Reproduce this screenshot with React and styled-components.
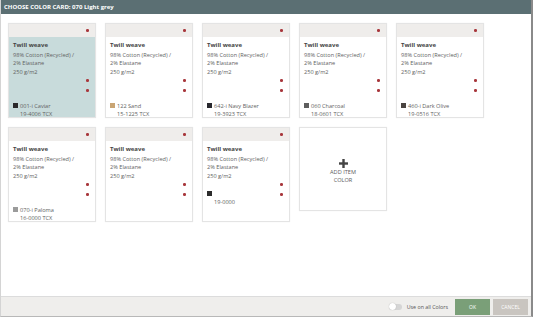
import React from 'react'
import styled, { createGlobalStyle } from 'styled-components'

const GlobalStyle = createGlobalStyle`
  html, body {
    margin: 0;
    padding: 0;
    background: #fff;
  }
  body {
    font-family: "Open Sans", "Liberation Sans", sans-serif;
  }
`

const Dialog = styled.div`
  width: 533px;
  height: 317px;
  box-sizing: border-box;
  display: flex;
  flex-direction: column;
  border-left: 1px solid #d4d4d4;
  border-right: 2px solid #8a8a8a;
  border-bottom: 1px solid #b8b8b8;
  background: #fff;
  overflow: hidden;
`

const Title = styled.div`
  height: 14px;
  flex-shrink: 0;
  background: #5b6f73;
  color: #fff;
  font-size: 6px;
  font-weight: 700;
  line-height: 14px;
  padding-left: 3px;
  text-transform: uppercase;

  span {
    text-transform: none;
  }
`

const Grid = styled.div`
  display: grid;
  grid-template-columns: repeat(5, 88px);
  grid-auto-rows: min-content;
  column-gap: 9px;
  row-gap: 9px;
  padding: 9px 0 0 7px;
  align-items: start;
`

const Card = styled.div`
  height: 95px;
  box-sizing: border-box;
  border: 1px solid #e4e4e4;
  box-shadow: 0 0 1px rgba(0, 0, 0, 0.08);
  background: ${p => (p.$selected ? '#c8dbdb' : '#fff')};
  display: flex;
  flex-direction: column;
`

const CardHead = styled.div`
  height: 13px;
  flex-shrink: 0;
  background: #efedeb;
  display: flex;
  align-items: center;
  justify-content: flex-end;
  padding-right: 6px;
`

const Dot = styled.span`
  display: block;
  width: 2.6px;
  height: 2.6px;
  border-radius: 50%;
  background: #a8373c;
`

const CardBody = styled.div`
  padding: 4px 6px 0 4px;
  font-size: 5.6px;
  line-height: 8px;
  color: #626262;
`

const Fabric = styled.div`
  font-size: 6px;
  font-weight: 700;
  color: #444;
  margin-bottom: 2px;
`

const Weight = styled.div`
  margin-top: 1px;
`

const Dots = styled.div`
  display: flex;
  flex-direction: column;
  align-items: flex-end;
  gap: 7.4px;
  margin-top: 3px;
  margin-right: 0.5px;
`

const ColorInfo = styled.div`
  margin-top: ${p => (p.$raised ? '-6px' : '10px')};
`

const ColorName = styled.div`
  display: flex;
  align-items: center;
  gap: 2px;
  height: 8px;
`

const Swatch = styled.span`
  display: inline-block;
  width: 5px;
  height: 5px;
  background: ${p => p.$color};
`

const Code = styled.div`
  padding-left: 7px;
`

const AddCard = styled.div`
  height: 84px;
  box-sizing: border-box;
  border: 1px solid #e4e4e4;
  box-shadow: 0 0 1px rgba(0, 0, 0, 0.08);
  display: flex;
  flex-direction: column;
  align-items: center;
  justify-content: center;
  padding-top: 4px;
  font-size: 5.6px;
  line-height: 8px;
  color: #5d5d5d;
  text-align: center;
  text-transform: uppercase;

  svg {
    display: block;
  }
`

const Footer = styled.div`
  margin-top: auto;
  height: 19px;
  flex-shrink: 0;
  background: #efeeec;
  border-top: 1px solid #dcdcdc;
  display: flex;
  align-items: center;
  justify-content: flex-end;
  padding-right: 3px;
`

const Toggle = styled.span`
  position: relative;
  width: 13px;
  height: 6px;
  border-radius: 3px;
  background: #d5d5d5;
  margin-right: 5px;

  &::after {
    content: '';
    position: absolute;
    left: 0;
    top: -0.5px;
    width: 7px;
    height: 7px;
    border-radius: 50%;
    background: #fff;
    box-shadow: 0 0 1px rgba(0, 0, 0, 0.3);
  }
`

const ToggleLabel = styled.span`
  font-size: 5.3px;
  color: #555;
  margin-right: 4px;
`

const Button = styled.button`
  width: 35px;
  height: 16px;
  border: none;
  margin: 0 0 0 3px;
  padding: 0;
  font-family: inherit;
  font-size: 5px;
  color: #fff;
  text-transform: uppercase;
  background: ${p => (p.$primary ? '#7a9f78' : '#c9c5c0')};
`

const colors = [
  { name: '001-i Caviar', code: '19-4006 TCX', swatch: '#2b292b', selected: true },
  { name: '122 Sand', code: '15-1225 TCX', swatch: '#c9a574' },
  { name: '642-i Navy Blazer', code: '19-3923 TCX', swatch: '#28282e' },
  { name: '060 Charcoal', code: '18-0601 TCX', swatch: '#5e5e5e' },
  { name: '460-i Dark Olive', code: '19-0516 TCX', swatch: '#4a4441' },
  { name: '070-i Paloma', code: '16-0000 TCX', swatch: '#9b9b9b' },
  { empty: true },
  { name: '', code: '19-0000', swatch: '#2c2c2c', raised: true },
]

const PlusIcon = () => (
  <svg width="9" height="9" viewBox="0 0 9 9">
    <rect x="3.3" y="0" width="2.4" height="9" fill="#444" />
    <rect x="0" y="3.3" width="9" height="2.4" fill="#444" />
  </svg>
)

const ColorCard = ({ color }) => (
  <Card $selected={color.selected}>
    <CardHead>
      <Dot />
    </CardHead>
    <CardBody>
      <Fabric>Twill weave</Fabric>
      <div>98% Cotton (Recycled) /</div>
      <div>2% Elastane</div>
      <Weight>250 g/m2</Weight>
      <Dots>
        <Dot />
        <Dot />
      </Dots>
      {!color.empty && (
        <ColorInfo $raised={color.raised}>
          <ColorName>
            <Swatch $color={color.swatch} />
            {color.name}
          </ColorName>
          <Code>{color.code}</Code>
        </ColorInfo>
      )}
    </CardBody>
  </Card>
)

const App = () => {
  return (
    <>
      <GlobalStyle />
      <Dialog>
        <Title>
          Choose color card: 070 <span>Light grey</span>
        </Title>
        <Grid>
          {colors.map((c, i) => (
            <ColorCard key={i} color={c} />
          ))}
          <AddCard>
            <PlusIcon />
            <div>Add item</div>
            <div>Color</div>
          </AddCard>
        </Grid>
        <Footer>
          <Toggle />
          <ToggleLabel>Use on all Colors</ToggleLabel>
          <Button $primary>OK</Button>
          <Button>Cancel</Button>
        </Footer>
      </Dialog>
    </>
  )
}

export default App
